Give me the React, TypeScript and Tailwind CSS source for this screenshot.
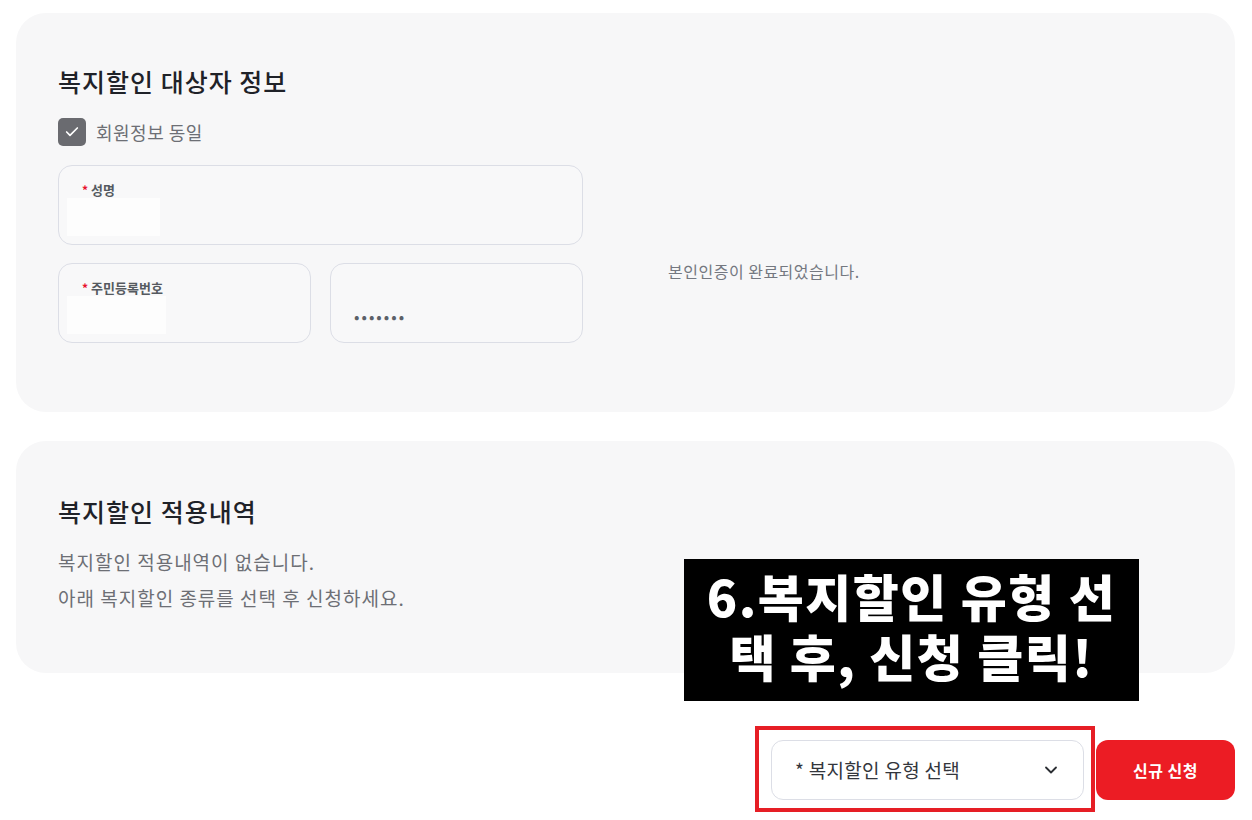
import { ChevronDown, Check } from "lucide-react"

const font = { fontFamily: '"Noto Sans CJK KR", "Noto Sans", sans-serif' }

function Field({
  label,
  masked,
  maskW = 93,
  className = "",
}: {
  label?: string
  masked?: string
  maskW?: number
  className?: string
}) {
  return (
    <div className={`h-[80px] rounded-[14px] border border-[#dcdee6] bg-[#f8f8f9] ${className}`}>
      {label && (
        <div className="pl-[23px] pt-[16px] text-[13px] font-bold leading-[16px] text-[#555a60] flex items-center">
          <span className="text-[#e8112d] mr-[3px] text-[12px]">*</span>
          {label}
        </div>
      )}
      {label && <div className="ml-[8px] h-[38px] bg-[#fdfdfd]" style={{ width: maskW }} />}
      {masked && (
        <div className="pl-[23px] pt-[40px] text-[16px] leading-[24px] tracking-[2px] text-[#5b6068]">{masked}</div>
      )}
    </div>
  )
}

export default function App() {
  return (
    <div className="min-h-screen bg-white pl-[16px] pr-[17px] pt-[13px]" style={font}>
      {/* 대상자 정보 */}
      <section className="h-[399px] rounded-[30px] bg-[#f7f7f8] px-[42px] pt-[52px]">
        <h2 className="text-[25px] font-medium leading-[32px] tracking-[1px] text-[#1f2228]">복지할인 대상자 정보</h2>
        <label className="mt-[21px] flex items-center gap-[10px]">
          <span className="flex h-[28px] w-[28px] items-center justify-center rounded-[5px] bg-[#6a6b70]">
            <Check className="h-[16px] w-[16px] text-white" strokeWidth={2.5} />
          </span>
          <span className="text-[18px] leading-[26px] tracking-[0.5px] text-[#6d6f75]">회원정보 동일</span>
        </label>
        <div className="mt-[19px] flex">
          <div className="w-[525px]">
            <Field label="성명" maskW={93} />
            <div className="mt-[18px] flex gap-[19px]">
              <Field label="주민등록번호" maskW={99} className="w-[253px]" />
              <Field masked="•••••••" className="w-[253px]" />
            </div>
          </div>
          <p className="ml-[85px] mt-[95px] text-[16px] leading-[22px] tracking-[0.5px] text-[#747880]">
            본인인증이 완료되었습니다.
          </p>
        </div>
      </section>

      {/* 적용내역 */}
      <section className="relative mt-[29px] h-[232px] rounded-[30px] bg-[#f7f7f8] px-[42px] pt-[54px]">
        <h2 className="text-[25px] font-medium leading-[32px] tracking-[1px] text-[#1f2228]">복지할인 적용내역</h2>
        <div className="mt-[17px] text-[19px] leading-[36px] tracking-[1px] text-[#6d6f75]">
          <p>복지할인 적용내역이 없습니다.</p>
          <p>아래 복지할인 종류를 선택 후 신청하세요.</p>
        </div>
        <div className="absolute left-[668px] top-[118px] z-10 flex h-[142px] w-[455px] flex-col items-center bg-black pt-[6px] text-[50px] font-black leading-[60px] tracking-[1.5px] text-white">
          <span>6.복지할인 유형 선</span>
          <span>택 후, 신청 클릭!</span>
        </div>
      </section>

      {/* 선택 + 신청 */}
      <div className="mt-[53px] flex items-start justify-end">
        <div className="h-[86px] w-[340px] border-4 border-[#e61e25] pl-[12px] pr-[7px] pt-[10px]">
          <div className="flex h-[60px] items-center justify-between rounded-[12px] border border-[#dcdee6] bg-white pl-[23px] pr-[22px]">
            <span className="text-[19px] tracking-[0.3px] text-[#33363c]">* 복지할인 유형 선택</span>
            <ChevronDown className="h-[20px] w-[20px] text-[#2b2e33]" strokeWidth={2.2} />
          </div>
        </div>
        <button className="ml-[1px] mt-[14px] h-[60px] w-[139px] rounded-[12px] bg-[#ec1c24] text-[16px] font-bold tracking-[0.5px] text-white">
          신규 신청
        </button>
      </div>
    </div>
  )
}
